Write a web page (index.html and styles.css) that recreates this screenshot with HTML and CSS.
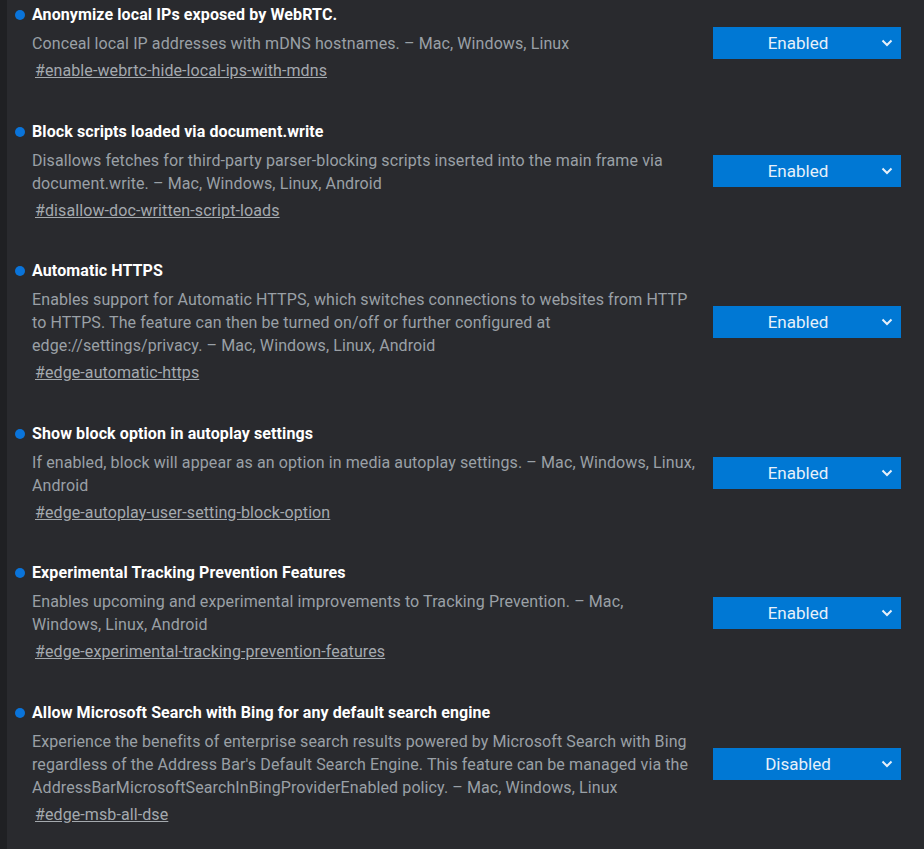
FILE: index.html
```html
<!DOCTYPE html>
<html lang="en">
<head>
    <meta charset="UTF-8">
    <title>Experiments</title>
    <link rel="stylesheet" href="styles.css">
</head>
<body>
    <div class="page">
        <div class="experiment">
            <div class="experiment-text">
                <h2 class="experiment-name"><span class="dot"></span>Anonymize local IPs exposed by WebRTC.</h2>
                <p class="experiment-desc">Conceal local IP addresses with mDNS hostnames. – Mac, Windows, Linux</p>
                <a class="permalink" href="#enable-webrtc-hide-local-ips-with-mdns">#enable-webrtc-hide-local-ips-with-mdns</a>
            </div>
            <div class="select-wrap">
                <select class="experiment-select">
                    <option>Default</option>
                    <option selected>Enabled</option>
                    <option>Disabled</option>
                </select>
                <svg class="chevron" width="12" height="8" viewBox="0 0 12 8"><path d="M1.5 1.5 L6 6 L10.5 1.5" fill="none" stroke="#e6f0fa" stroke-width="2"/></svg>
            </div>
        </div>

        <div class="experiment">
            <div class="experiment-text">
                <h2 class="experiment-name"><span class="dot"></span>Block scripts loaded via document.write</h2>
                <p class="experiment-desc">Disallows fetches for third-party parser-blocking scripts inserted into the main frame via document.write. – Mac, Windows, Linux, Android</p>
                <a class="permalink" href="#disallow-doc-written-script-loads">#disallow-doc-written-script-loads</a>
            </div>
            <div class="select-wrap">
                <select class="experiment-select">
                    <option>Default</option>
                    <option selected>Enabled</option>
                    <option>Disabled</option>
                </select>
                <svg class="chevron" width="12" height="8" viewBox="0 0 12 8"><path d="M1.5 1.5 L6 6 L10.5 1.5" fill="none" stroke="#e6f0fa" stroke-width="2"/></svg>
            </div>
        </div>

        <div class="experiment">
            <div class="experiment-text">
                <h2 class="experiment-name"><span class="dot"></span>Automatic HTTPS</h2>
                <p class="experiment-desc">Enables support for Automatic HTTPS, which switches connections to websites from HTTP to HTTPS. The feature can then be turned on/off or further configured at edge://settings/privacy. – Mac, Windows, Linux, Android</p>
                <a class="permalink" href="#edge-automatic-https">#edge-automatic-https</a>
            </div>
            <div class="select-wrap">
                <select class="experiment-select">
                    <option>Default</option>
                    <option selected>Enabled</option>
                    <option>Disabled</option>
                </select>
                <svg class="chevron" width="12" height="8" viewBox="0 0 12 8"><path d="M1.5 1.5 L6 6 L10.5 1.5" fill="none" stroke="#e6f0fa" stroke-width="2"/></svg>
            </div>
        </div>

        <div class="experiment">
            <div class="experiment-text">
                <h2 class="experiment-name"><span class="dot"></span>Show block option in autoplay settings</h2>
                <p class="experiment-desc">If enabled, block will appear as an option in media autoplay settings. – Mac, Windows, Linux, Android</p>
                <a class="permalink" href="#edge-autoplay-user-setting-block-option">#edge-autoplay-user-setting-block-option</a>
            </div>
            <div class="select-wrap">
                <select class="experiment-select">
                    <option>Default</option>
                    <option selected>Enabled</option>
                    <option>Disabled</option>
                </select>
                <svg class="chevron" width="12" height="8" viewBox="0 0 12 8"><path d="M1.5 1.5 L6 6 L10.5 1.5" fill="none" stroke="#e6f0fa" stroke-width="2"/></svg>
            </div>
        </div>

        <div class="experiment">
            <div class="experiment-text">
                <h2 class="experiment-name"><span class="dot"></span>Experimental Tracking Prevention Features</h2>
                <p class="experiment-desc">Enables upcoming and experimental improvements to Tracking Prevention. – Mac, Windows, Linux, Android</p>
                <a class="permalink" href="#edge-experimental-tracking-prevention-features">#edge-experimental-tracking-prevention-features</a>
            </div>
            <div class="select-wrap">
                <select class="experiment-select">
                    <option>Default</option>
                    <option selected>Enabled</option>
                    <option>Disabled</option>
                </select>
                <svg class="chevron" width="12" height="8" viewBox="0 0 12 8"><path d="M1.5 1.5 L6 6 L10.5 1.5" fill="none" stroke="#e6f0fa" stroke-width="2"/></svg>
            </div>
        </div>

        <div class="experiment">
            <div class="experiment-text">
                <h2 class="experiment-name"><span class="dot"></span>Allow Microsoft Search with Bing for any default search engine</h2>
                <p class="experiment-desc">Experience the benefits of enterprise search results powered by Microsoft Search with Bing regardless of the Address Bar's Default Search Engine. This feature can be managed via the AddressBarMicrosoftSearchInBingProviderEnabled policy. – Mac, Windows, Linux</p>
                <a class="permalink" href="#edge-msb-all-dse">#edge-msb-all-dse</a>
            </div>
            <div class="select-wrap">
                <select class="experiment-select">
                    <option>Default</option>
                    <option>Enabled</option>
                    <option selected>Disabled</option>
                </select>
                <svg class="chevron" width="12" height="8" viewBox="0 0 12 8"><path d="M1.5 1.5 L6 6 L10.5 1.5" fill="none" stroke="#e6f0fa" stroke-width="2"/></svg>
            </div>
        </div>
    </div>
</body>
</html>
```

FILE: styles.css
```css
body {
    margin: 0;
    background-color: #1f2023;
    font-family: Roboto, "Liberation Sans", Arial, sans-serif;
}
.page {
    margin-left: 7px;
    min-height: 100vh;
    background-color: #292a2e;
    padding: 4px 23px 0 25px;
}
.experiment {
    display: grid;
    grid-template-columns: 1fr 188px;
    gap: 17px;
    align-items: center;
    padding-bottom: 38.5px;
}
.experiment-name {
    display: flex;
    align-items: center;
    margin: 0;
    font-size: 16px;
    font-weight: bold;
    line-height: 22px;
    letter-spacing: 0.1px;
    color: #ffffff;
}
.dot {
    width: 10px;
    height: 10px;
    border-radius: 50%;
    background-color: #0a74da;
    margin-left: -17px;
    margin-right: 7px;
    flex-shrink: 0;
}
.experiment-desc {
    margin: 6px 0 0;
    font-size: 16px;
    line-height: 23px;
    letter-spacing: 0.1px;
    color: #9aa0a6;
}
.permalink {
    display: inline-block;
    margin-top: 4px;
    margin-left: 3px;
    font-size: 16px;
    line-height: 23px;
    letter-spacing: 0.1px;
    color: #a4a9ae;
}
.select-wrap {
    position: relative;
}
.experiment-select {
    appearance: none;
    width: 100%;
    height: 32px;
    border: none;
    border-radius: 0;
    padding: 0 18px 0 0;
    background-color: #0078d4;
    color: #e6f0fa;
    font-family: inherit;
    font-size: 17px;
    text-align: center;
    text-align-last: center;
}
.chevron {
    position: absolute;
    right: 8px;
    top: 12px;
    pointer-events: none;
}
```
